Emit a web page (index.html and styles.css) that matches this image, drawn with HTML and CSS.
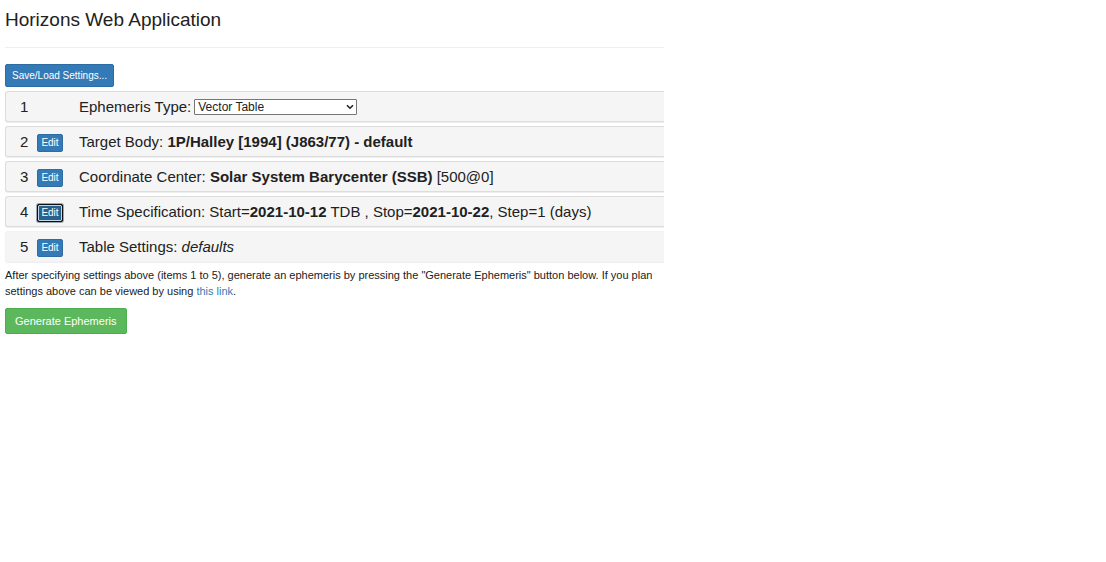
FILE: index.html
```html
<!DOCTYPE html>
<html lang="en">
<head>
<meta charset="utf-8">
<title>Horizons Web Application</title>
<link rel="stylesheet" href="styles.css">
</head>
<body>
<main class="app">
  <h1 class="title">Horizons Web Application</h1>
  <hr class="rule">
  <button type="button" class="btn btn-save">Save/Load Settings...</button>
  <ol class="settings">
    <li class="row">
      <span class="num">1</span><span class="action"></span>
      <label class="text" for="etype">Ephemeris Type:</label>
      <span class="picker">
        <select id="etype" class="select"><option>Vector Table</option></select>
        <svg class="chevron" viewBox="0 0 8 6" aria-hidden="true"><path d="M1 1.2 4 4.2 7 1.2"/></svg>
      </span>
    </li>
    <li class="row">
      <span class="num">2</span><span class="action"><button type="button" class="btn btn-edit">Edit</button></span>
      <span class="text">Target Body: <b>1P/Halley [1994] (J863/77) - default</b></span>
    </li>
    <li class="row">
      <span class="num">3</span><span class="action"><button type="button" class="btn btn-edit">Edit</button></span>
      <span class="text">Coordinate Center: <b>Solar System Barycenter (SSB)</b> [500@0]</span>
    </li>
    <li class="row">
      <span class="num">4</span><span class="action"><button type="button" class="btn btn-edit focused">Edit</button></span>
      <span class="text">Time Specification: Start=<b>2021-10-12</b> TDB , Stop=<b>2021-10-22</b>, Step=1 (days)</span>
    </li>
    <li class="row row-last">
      <span class="num">5</span><span class="action"><button type="button" class="btn btn-edit">Edit</button></span>
      <span class="text">Table Settings: <i>defaults</i></span>
    </li>
  </ol>
  <p class="note">After specifying settings above (items 1 to 5), generate an ephemeris by pressing the "Generate Ephemeris" button below. If you plan<br>settings above can be viewed by using <a class="link" href="#link">this link</a>.</p>
  <button type="button" class="btn btn-generate">Generate Ephemeris</button>
</main>
</body>
</html>
```
FILE: styles.css
```css
* { box-sizing: border-box; }
body {
  margin: 0;
  background: #fff;
  color: #212121;
  font-family: "Liberation Sans", Arial, sans-serif;
}
.app {
  width: 60%;
  padding: 8px 0 0 5px;
  overflow: hidden;
}
.title {
  margin: 0;
  font-size: 19px;
  font-weight: 400;
  line-height: 24px;
}
.rule {
  margin: 15px 0 16px;
  border: 0;
  border-top: 1px solid #eee;
}
.btn {
  display: block;
  border: 1px solid #2e6da4;
  border-radius: 2px;
  background: #337ab7;
  color: #fff;
  font-family: inherit;
  white-space: nowrap;
}
.btn-save {
  height: 23px;
  padding: 0 6px;
  font-size: 10px;
}
.settings {
  display: flex;
  flex-direction: column;
  gap: 4px;
  margin: 4px 0 0;
  padding: 0;
  list-style: none;
}
.row {
  display: flex;
  align-items: center;
  height: 31px;
  border: 1px solid #ddd;
  border-right: 0;
  border-radius: 3px 0 0 3px;
  background: #f5f5f5;
  box-shadow: 0 1px 1px #eee;
  font-size: 15px;
  white-space: nowrap;
}
.row-last { border-color: #f2f2f2; }
.num {
  width: 31px;
  padding-left: 14px;
}
.action { width: 42px; }
.btn-edit {
  width: 26px;
  height: 18px;
  margin-top: 2px;
  padding: 0;
  font-size: 10px;
}
.focused {
  border-color: #101010;
  outline: 1px solid #101010;
  outline-offset: -1px;
  box-shadow: inset 0 0 0 1px #c8d4de, 0 0 0 1px #9aa6b0;
  background: #286090;
}
.picker {
  position: relative;
  margin-left: 3px;
}
.select {
  display: block;
  width: 163px;
  height: 16px;
  padding: 0 3px;
  border: 1px solid #767676;
  border-radius: 1px;
  appearance: none;
  background: #fff;
  color: #212121;
  font-family: inherit;
  font-size: 12px;
  line-height: 14px;
}
.chevron {
  position: absolute;
  top: 5px;
  right: 3px;
  width: 8px;
  height: 6px;
  fill: none;
  stroke: #222;
  stroke-width: 1.6;
  pointer-events: none;
}
.note {
  margin: 5px 0 9px;
  font-size: 11px;
  line-height: 16px;
  white-space: nowrap;
}
.link {
  color: #337ab7;
  text-decoration: none;
}
.btn-generate {
  height: 26px;
  padding: 0 9px;
  border-color: #4cae4c;
  background: #5cb85c;
  font-size: 11px;
}
```
